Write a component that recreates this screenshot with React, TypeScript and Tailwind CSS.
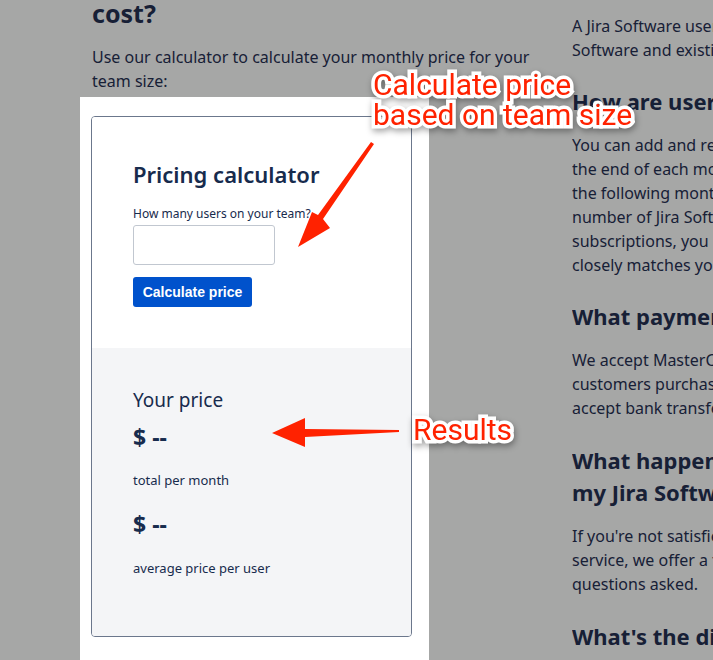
import React from 'react'

const FONT = "font-['Noto_Sans','Open_Sans',sans-serif]"

const RIGHT_TOP = [
  'A Jira Software user is anyone who has access to Jira',
  'Software and existing licenses in your site.',
]

const RIGHT_USERS = [
  'You can add and remove users at any time. Then at',
  'the end of each month we count your users and bill',
  'the following month. Once you reach a certain',
  'number of Jira Software users in your monthly',
  'subscriptions, you may want a plan that more',
  'closely matches your team size.',
]

const RIGHT_PAYMENT = [
  'We accept MasterCard, Visa and American Express. For',
  'customers purchasing annually or larger plans, we also',
  'accept bank transfers and checks.',
]

const RIGHT_REFUND = [
  "If you're not satisfied with Jira Software or our",
  'service, we offer a full refund within 30 days, no',
  'questions asked.',
]

function Lines({ lines }: { lines: string[] }) {
  return (
    <div className="text-[16px] leading-[24px]">
      {lines.map((l) => (
        <div key={l} className="whitespace-nowrap">
          {l}
        </div>
      ))}
    </div>
  )
}

function Heading({ children }: { children: React.ReactNode }) {
  return <h3 className="text-[22px] leading-[32px] font-bold whitespace-nowrap">{children}</h3>
}

function Calculator() {
  return (
    <div className="w-[321px] rounded-[4px] border border-[#6b778c] overflow-hidden text-[#172b4d]">
      <div className="bg-white pl-[41px] pt-[41px] pb-[41px]">
        <h2 className="text-[22px] leading-[32px] font-semibold">Pricing calculator</h2>
        <label className="block mt-[16px] text-[12px] leading-[16px]">How many users on your team?</label>
        <input
          type="text"
          className="block mt-[3px] w-[142px] h-[40px] rounded-[3px] border border-[#c1c7d0] bg-white outline-none"
        />
        <button
          type="button"
          className="mt-[12px] h-[30px] w-[119px] rounded-[3px] bg-[#0052cc] text-white text-[14px] font-bold font-['Liberation_Sans',Arial,sans-serif]"
        >
          Calculate price
        </button>
      </div>
      <div className="bg-[#f4f5f7] pl-[41px] pt-[38px] pb-[58px]">
        <div className="text-[19px] leading-[28px]">Your price</div>
        <div className="mt-[7px] text-[23px] leading-[32px] font-bold">$ --</div>
        <div className="mt-[17px] text-[13px] leading-[20px]">total per month</div>
        <div className="mt-[18px] text-[23px] leading-[32px] font-bold">$ --</div>
        <div className="mt-[18px] text-[13px] leading-[20px]">average price per user</div>
      </div>
    </div>
  )
}

const NOTE =
  "absolute font-['Roboto',sans-serif] text-[30px] leading-[30px] text-[#ff2200] whitespace-nowrap [paint-order:stroke_fill] [-webkit-text-stroke:7px_white] [filter:drop-shadow(1px_3px_3px_rgba(0,0,0,0.35))]"

export default function App() {
  return (
    <div className={`relative w-[713px] h-[660px] overflow-hidden bg-[#a6a7a6] text-[#172036] ${FONT}`}>
      <div className="flex pl-[80px]">
        {/* left column */}
        <div className="w-[492px] shrink-0">
          <div className="pl-[12px]">
            <h2 className="mt-[-3px] text-[25px] leading-[32px] font-bold">cost?</h2>
            <p className="mt-[16px] text-[16px] leading-[24px] w-[448px]">
              Use our calculator to calculate your monthly price for your team size:
            </p>
          </div>
          <div className="mt-[4px] w-[349px] h-[600px] bg-white pl-[11px] pt-[19px]">
            <Calculator />
          </div>
        </div>

        {/* right column */}
        <div className="flex-1 min-w-0 overflow-hidden pt-[14px]">
          <Lines lines={RIGHT_TOP} />
          <div className="mt-[23px]"><Heading>How are users counted?</Heading></div>
          <div className="mt-[16px]"><Lines lines={RIGHT_USERS} /></div>
          <div className="mt-[23px]"><Heading>What payment methods do you accept?</Heading></div>
          <div className="mt-[16px]"><Lines lines={RIGHT_PAYMENT} /></div>
          <div className="mt-[24px]">
            <Heading>What happens if I'm not satisfied with</Heading>
            <Heading>my Jira Software purchase?</Heading>
          </div>
          <div className="mt-[16px]"><Lines lines={RIGHT_REFUND} /></div>
          <div className="mt-[24px]"><Heading>What's the difference between plans?</Heading></div>
        </div>
      </div>

      {/* annotations */}
      <svg className="absolute left-0 top-0" width="713" height="660" viewBox="0 0 713 660">
        <polygon points="371,142 374,144 323,219 330,228 298,247 312,212 318,215" fill="#ff2200" />
        <polygon points="399,430 399,432 305,437 305,447 272,433 305,418 305,429" fill="#ff2200" />
      </svg>
      <div className={`${NOTE} left-[373px] top-[70px]`}>
        Calculate price
        <br />
        based on team size
      </div>
      <div className={`${NOTE} left-[413px] top-[415px]`}>Results</div>
    </div>
  )
}
